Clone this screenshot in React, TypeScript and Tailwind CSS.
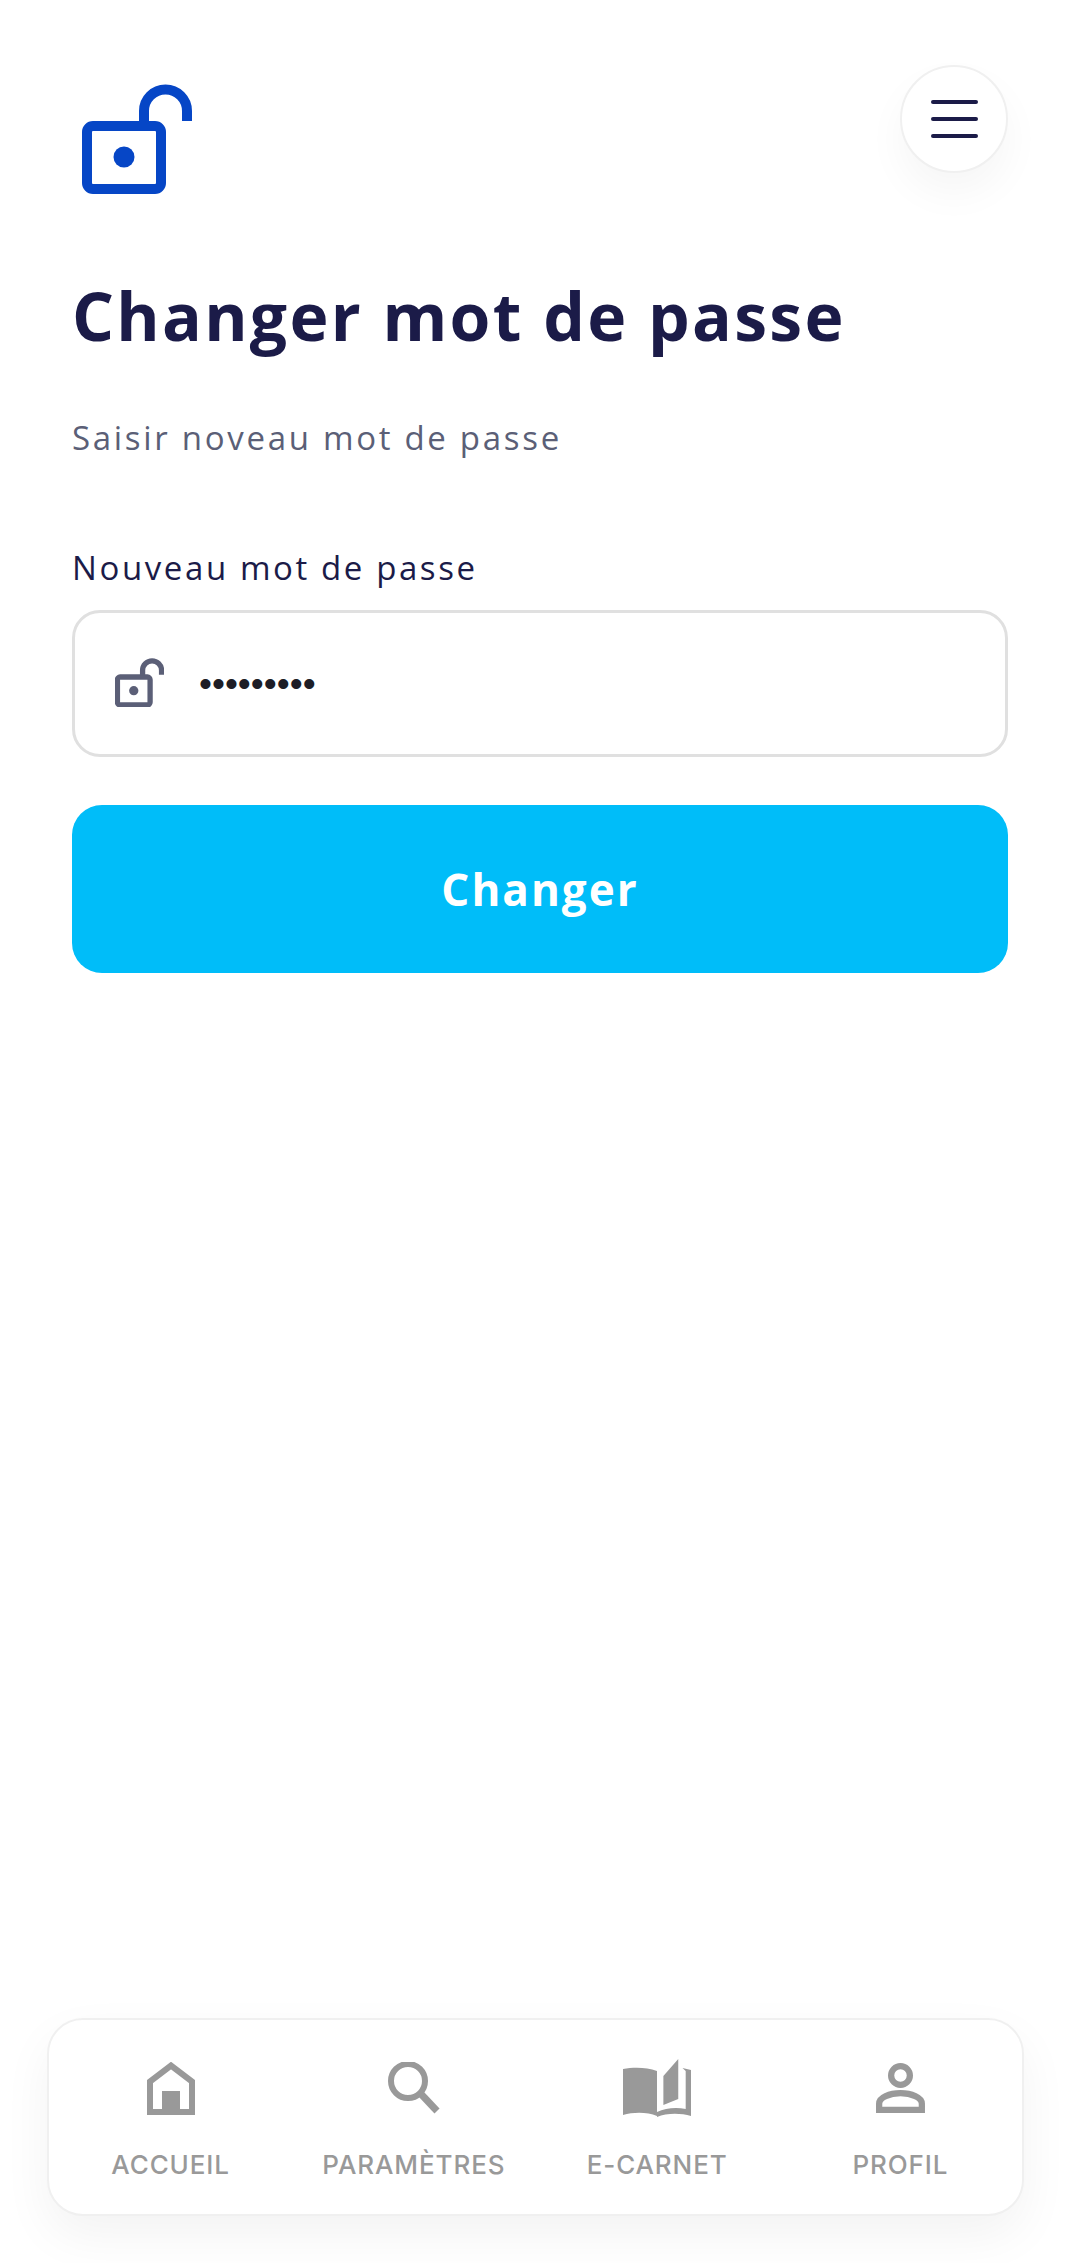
const sans = "font-['Open_Sans',sans-serif]";

function OpenLock({ className, stroke = 10 }: { className?: string; stroke?: number }) {
  return (
    <svg viewBox="0 0 110 111" fill="none" className={className}>
      <rect x="5" y="43" width="74" height="63" rx="6" stroke="currentColor" strokeWidth={stroke} />
      <path d="M62 40V28a21.5 21.5 0 0 1 43 0v10" stroke="currentColor" strokeWidth={stroke} />
      <circle cx="42" cy="74" r="10.5" fill="currentColor" />
    </svg>
  );
}

function NavItem({ label, icon }: { label: string; icon: React.ReactNode }) {
  return (
    <div className="flex flex-col items-center">
      <div className="flex h-[60px] items-center justify-center">{icon}</div>
      <span className="mt-[32px] font-['Inter',sans-serif] text-[26px] leading-[30px] font-medium tracking-[0.9px] text-[#999999]">
        {label}
      </span>
    </div>
  );
}

export default function App() {
  return (
    <div className={`flex h-[2263px] flex-col bg-white ${sans}`}>
      <div className="px-[72px] pt-[65px]">
        <div className="flex items-start justify-between">
          <OpenLock className="mt-[18px] ml-[10px] h-[111px] w-[110px] text-[#0646c6]" />
          <button className="flex h-[108px] w-[108px] flex-col items-center justify-center gap-[13px] rounded-full border-2 border-[#f0f0f0] bg-white shadow-[0_20px_40px_rgba(0,0,0,0.04)]">
            <span className="h-[4px] w-[47px] rounded-full bg-[#1b1b48]" />
            <span className="h-[4px] w-[47px] rounded-full bg-[#1b1b48]" />
            <span className="h-[4px] w-[47px] rounded-full bg-[#1b1b48]" />
          </button>
        </div>

        <h1 className="mt-[76px] text-[66px] leading-[90px] font-bold tracking-[2.3px] text-[#1b1b48]">
          Changer mot de passe
        </h1>
        <p className="mt-[56px] text-[33px] leading-[44px] tracking-[2.7px] text-[#5b5f77]">
          Saisir noveau mot de passe
        </p>

        <label className="mt-[86px] block text-[33px] leading-[44px] tracking-[2.6px] text-[#1b1b48]">
          Nouveau mot de passe
        </label>
        <div className="mt-[20px] flex h-[147px] items-center rounded-[28px] border-[3px] border-[#e0e0e0] pl-[40px]">
          <OpenLock stroke={12} className="mb-[2px] h-[49px] w-[49px] text-[#5b5f77]" />
          <input
            type="password"
            readOnly
            value="azerty123"
            className="ml-[35px] w-[400px] font-['Liberation_Sans',sans-serif] text-[37px] text-[#1d1d26] outline-none"
          />
        </div>

        <button className="mt-[48px] h-[168px] w-full rounded-[30px] bg-[#00bdf9] text-[44px] font-bold tracking-[2px] text-white">
          Changer
        </button>
      </div>

      <nav className="mt-auto mr-[56px] mb-[47px] ml-[47px] grid h-[198px] grid-cols-4 rounded-[36px] border-2 border-[#f0f0f0] bg-white pt-[38px] shadow-[0_20px_50px_rgba(0,0,0,0.05)]">
        <NavItem
          label="ACCUEIL"
          icon={
            <svg viewBox="0 0 48 53" className="h-[53px] w-[48px] text-[#999999]" fill="none">
              <path d="M3 50V19.5L24 3.5l21 16V50Z" stroke="currentColor" strokeWidth="6" />
              <rect x="15" y="29" width="18" height="24" fill="currentColor" />
            </svg>
          }
        />
        <NavItem
          label="PARAMÈTRES"
          icon={
            <svg viewBox="0 0 52 52" className="h-[52px] w-[52px] text-[#999999]" fill="none">
              <circle cx="20" cy="19" r="17" stroke="currentColor" strokeWidth="6" />
              <path d="M33 32 49 49" stroke="currentColor" strokeWidth="7" />
            </svg>
          }
        />
        <NavItem
          label="E-CARNET"
          icon={
            <svg viewBox="0 0 64 58" className="h-[58px] w-[68px] text-[#999999]" fill="currentColor" preserveAspectRatio="none">
              <path d="M0 10c10-2 22-2 32 2v45c-9-4-22-4-32-1Z" />
              <path d="M38 17 52 0v40L38 46Z" />
              <path d="M56 9l8 2v46c-10-3-23-3-32 1v-5c8-4 18-5 27-3V12Z" />
            </svg>
          }
        />
        <NavItem
          label="PROFIL"
          icon={
            <svg viewBox="0 0 47 48" className="h-[50px] w-[49px] text-[#999999]" fill="none">
              <circle cx="23.5" cy="12" r="9" stroke="currentColor" strokeWidth="6" />
              <path d="M3 45v-6c0-6 10-10 20.5-10S44 33 44 39v6Z" stroke="currentColor" strokeWidth="6" />
            </svg>
          }
        />
      </nav>
    </div>
  );
}
